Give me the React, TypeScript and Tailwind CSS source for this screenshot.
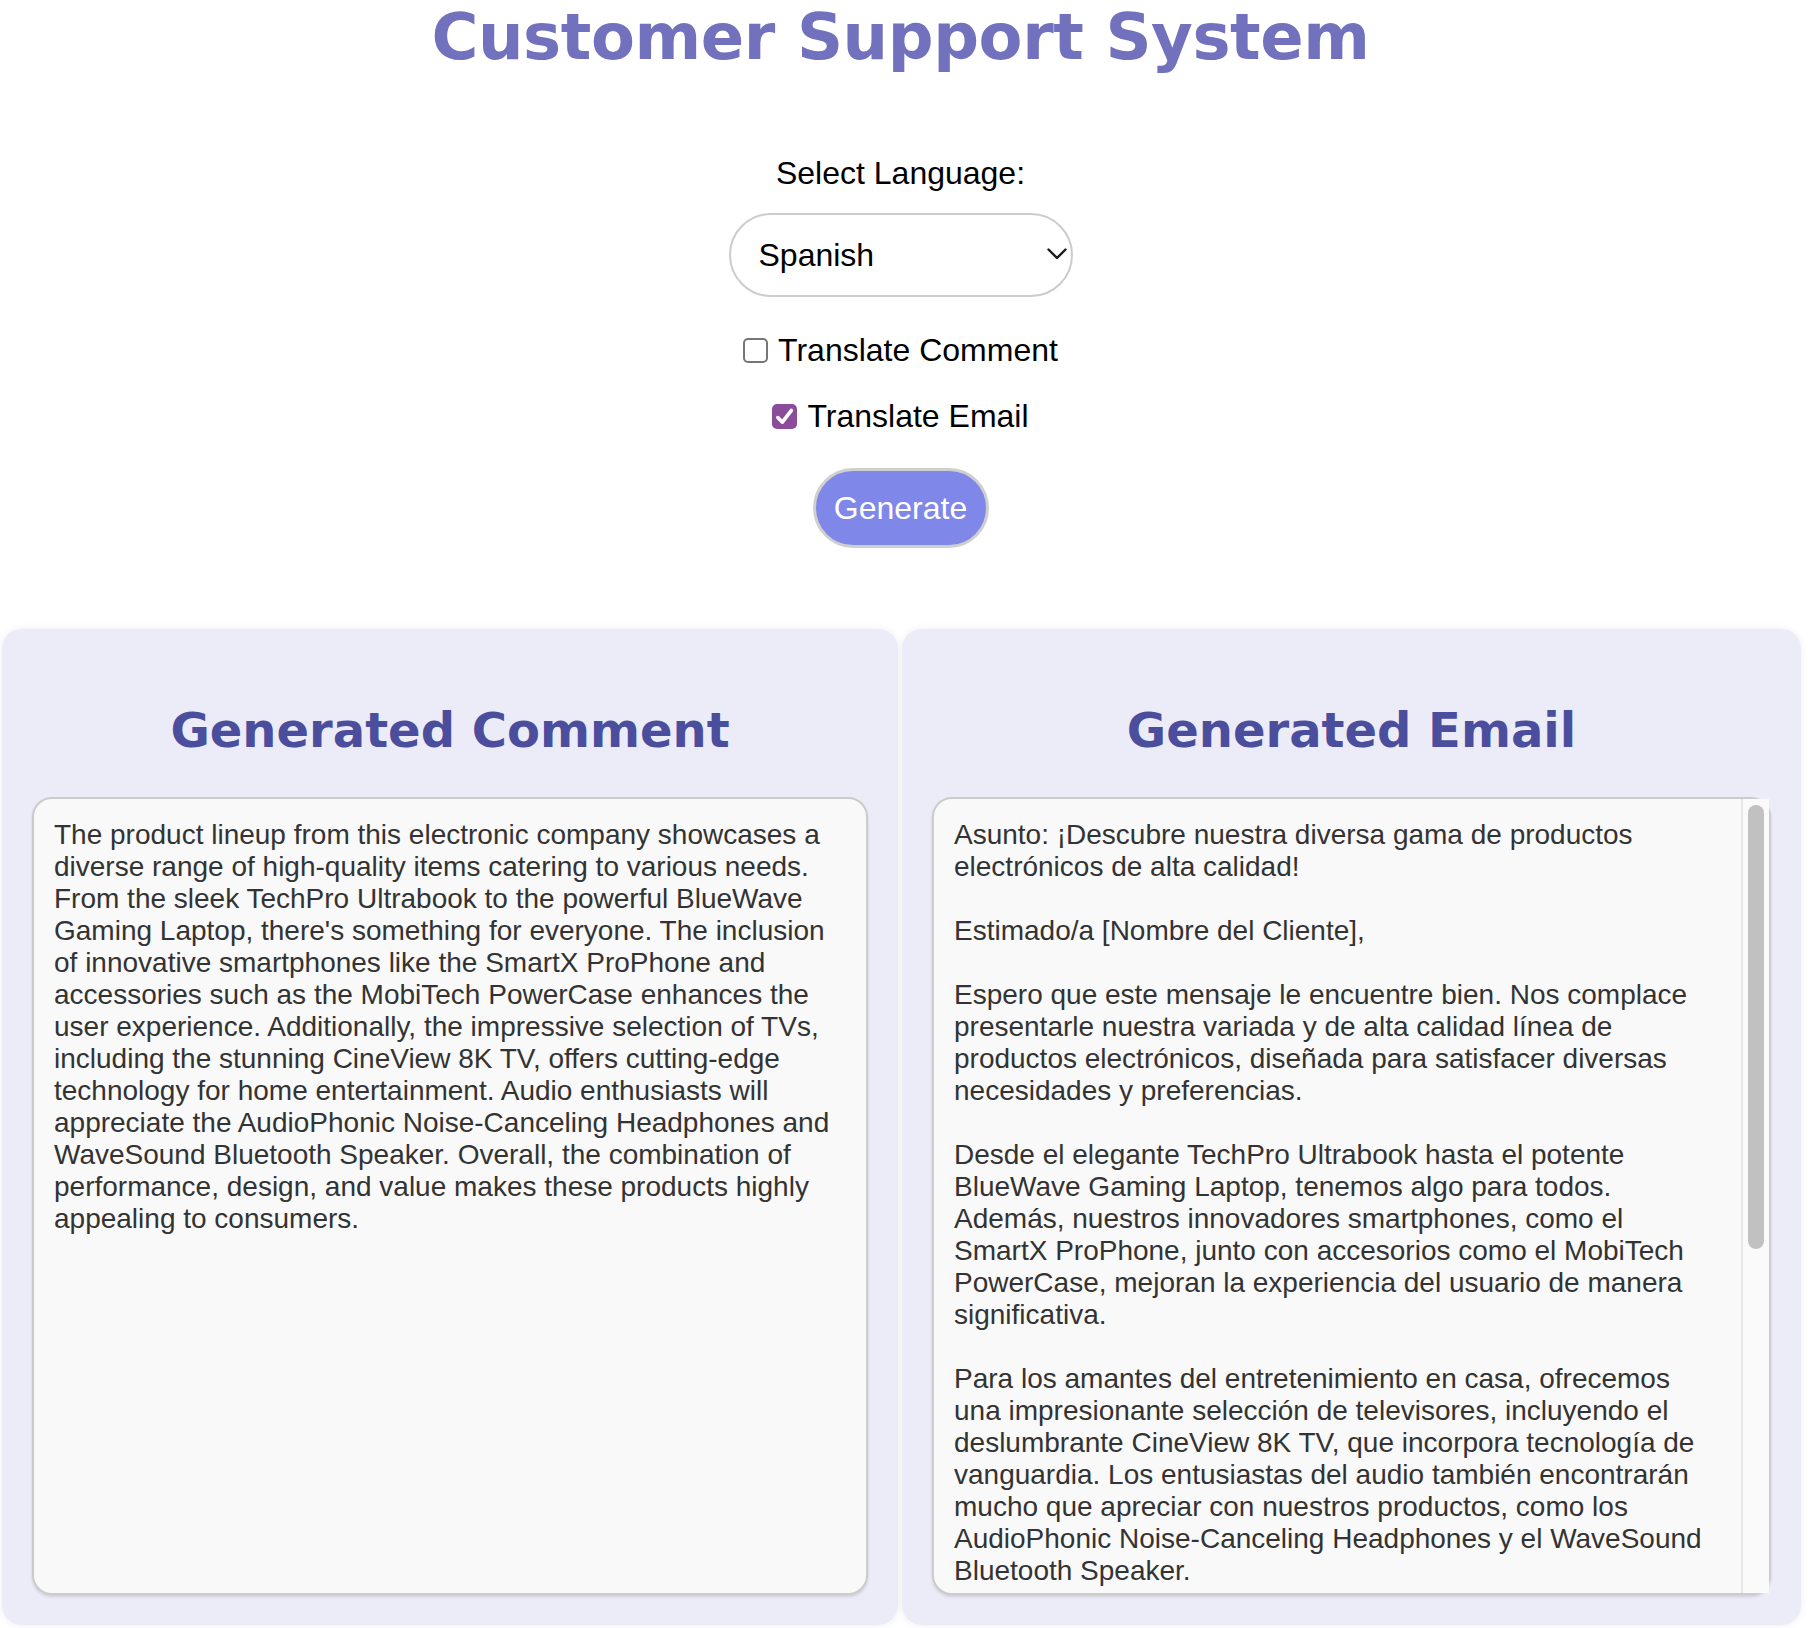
import React, { useState } from 'react';

const comment =
  "The product lineup from this electronic company showcases a diverse range of high-quality items catering to various needs. From the sleek TechPro Ultrabook to the powerful BlueWave Gaming Laptop, there's something for everyone. The inclusion of innovative smartphones like the SmartX ProPhone and accessories such as the MobiTech PowerCase enhances the user experience. Additionally, the impressive selection of TVs, including the stunning CineView 8K TV, offers cutting-edge technology for home entertainment. Audio enthusiasts will appreciate the AudioPhonic Noise-Canceling Headphones and WaveSound Bluetooth Speaker. Overall, the combination of performance, design, and value makes these products highly appealing to consumers.";

const email = `Asunto: ¡Descubre nuestra diversa gama de productos electrónicos de alta calidad!

Estimado/a [Nombre del Cliente],

Espero que este mensaje le encuentre bien. Nos complace presentarle nuestra variada y de alta calidad línea de productos electrónicos, diseñada para satisfacer diversas necesidades y preferencias.

Desde el elegante TechPro Ultrabook hasta el potente BlueWave Gaming Laptop, tenemos algo para todos. Además, nuestros innovadores smartphones, como el SmartX ProPhone, junto con accesorios como el MobiTech PowerCase, mejoran la experiencia del usuario de manera significativa.

Para los amantes del entretenimiento en casa, ofrecemos una impresionante selección de televisores, incluyendo el deslumbrante CineView 8K TV, que incorpora tecnología de vanguardia. Los entusiastas del audio también encontrarán mucho que apreciar con nuestros productos, como los AudioPhonic Noise-Canceling Headphones y el WaveSound Bluetooth Speaker.`;

const Checkbox: React.FC<{ label: string; checked: boolean; onChange: (v: boolean) => void }> = ({
  label,
  checked,
  onChange,
}) => (
  <label className="flex items-center gap-[10px] h-[37px] text-[32px] leading-[37px] cursor-pointer">
    <span className="relative w-[25px] h-[25px]">
      <input
        type="checkbox"
        checked={checked}
        onChange={(e) => onChange(e.target.checked)}
        className="appearance-none block w-[25px] h-[25px] m-0 rounded-[5px] border-[2.5px] border-[#767676] bg-white checked:bg-[#8b4c9c] checked:border-[#8b4c9c]"
      />
      {checked && (
        <svg className="pointer-events-none absolute left-0 top-0" width="25" height="25" viewBox="0 0 25 25">
          <path d="M5.8 13.6 L10.4 18.2 L19.4 6.4" fill="none" stroke="#ffffff" strokeWidth="3.6" strokeLinecap="round" strokeLinejoin="round" />
        </svg>
      )}
    </span>
    <span>{label}</span>
  </label>
);

export default function App() {
  const [language, setLanguage] = useState('Spanish');
  const [translateComment, setTranslateComment] = useState(false);
  const [translateEmail, setTranslateEmail] = useState(true);

  return (
    <div className="w-[1803px] min-h-screen bg-white text-black font-['Liberation_Sans',Arial,sans-serif]">
      {/* Header + controls */}
      <div className="w-[1801px] flex flex-col items-center">
        <h1 className="m-0 text-[64px] leading-[75px] font-bold tracking-[-0.4px] text-[#7171bd] font-['DejaVu_Sans',Verdana,sans-serif]">
          Customer Support System
        </h1>

        <label htmlFor="language" className="mt-[80px] text-[32px] leading-[37px]">
          Select Language:
        </label>

        <div className="relative mt-[21px]">
          <select
            id="language"
            value={language}
            onChange={(e) => setLanguage(e.target.value)}
            className="appearance-none block w-[344px] h-[84px] rounded-full border-2 border-[#cccccc] bg-white pl-[28px] pr-[40px] text-[32px] text-black outline-none font-['Liberation_Sans',Arial,sans-serif]"
          >
            <option>English</option>
            <option>Spanish</option>
            <option>French</option>
            <option>German</option>
            <option>Italian</option>
          </select>
          <svg className="pointer-events-none absolute left-[318px] top-[35px]" width="20" height="12" viewBox="0 0 20 12">
            <path d="M1.5 1.5 L10 10 L18.5 1.5" fill="none" stroke="#1a1a1a" strokeWidth="2.4" strokeLinecap="round" strokeLinejoin="round" />
          </svg>
        </div>

        <div className="mt-[35px]">
          <Checkbox label="Translate Comment" checked={translateComment} onChange={setTranslateComment} />
        </div>
        <div className="mt-[29px]">
          <Checkbox label="Translate Email" checked={translateEmail} onChange={setTranslateEmail} />
        </div>

        <button className="mt-[33px] w-[176px] h-[80px] rounded-full border-[3px] border-[#cfcfcf] bg-[#7f88e8] text-white text-[32px] leading-none font-['Liberation_Sans',Arial,sans-serif]">
          Generate
        </button>
      </div>

      {/* Output cards */}
      <div className="mt-[81px] flex gap-[4px] pl-[2px]">
        <section className="w-[896px] rounded-[20px] bg-[#ececf8] p-[30px] shadow-[0_0_8px_rgba(0,0,0,0.07)]">
          <h2 className="mt-[43px] mb-[39px] text-center text-[48px] leading-[56px] font-bold text-[#4b4e9d] font-['DejaVu_Sans',Verdana,sans-serif]">
            Generated Comment
          </h2>
          <div className="h-[798px] rounded-[20px] border-2 border-[#cccccc] bg-[#f9f9f9] p-[20px] text-[28px] leading-[32px] text-[#333333] shadow-[0_2px_3px_rgba(0,0,0,0.12)] overflow-hidden">
            {comment}
          </div>
        </section>

        <section className="w-[899px] rounded-[20px] bg-[#ececf8] p-[30px] shadow-[0_0_8px_rgba(0,0,0,0.07)]">
          <h2 className="mt-[43px] mb-[39px] text-center text-[48px] leading-[56px] font-bold text-[#4b4e9d] font-['DejaVu_Sans',Verdana,sans-serif]">
            Generated Email
          </h2>
          <div className="flex h-[798px] rounded-[20px] border-2 border-[#cccccc] bg-[#f9f9f9] shadow-[0_2px_3px_rgba(0,0,0,0.12)]">
            <div className="flex-1 min-w-0 h-full overflow-hidden p-[20px] text-[28px] leading-[32px] text-[#333333] whitespace-pre-wrap">
              {email}
            </div>
            {/* scrollbar */}
            <div className="w-[28px] h-full border-l-2 border-[#e6e6e6] bg-[#fafafa] pt-[6px] pl-[5px]">
              <div className="w-[16px] h-[444px] rounded-full bg-[#c1c1c1]" />
            </div>
          </div>
        </section>
      </div>
    </div>
  );
}
